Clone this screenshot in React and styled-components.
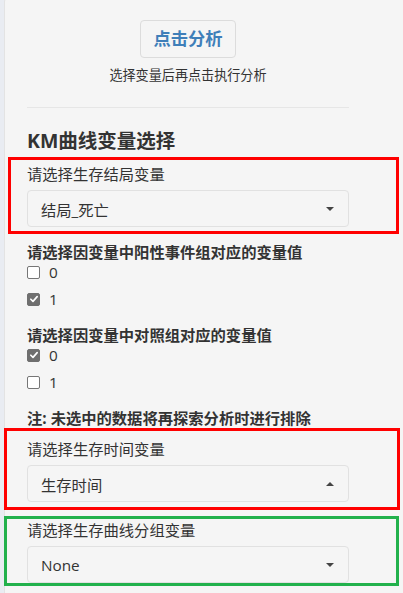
import React from "react";
import styled, { createGlobalStyle } from "styled-components";

const GlobalStyle = createGlobalStyle`
  html, body {
    margin: 0;
    padding: 0;
    overflow: hidden;
    background: #e9ecf2;
  }
  body {
    font-family: "Open Sans", "Noto Sans CJK SC", sans-serif;
    color: #333;
  }
`;

function Caret({ up }) {
  return (
    <S.Caret viewBox="0 0 8 4" $up={up}>
      <path d="M0 0 L8 0 L4 4 Z" fill="#444" />
    </S.Caret>
  );
}

function Select({ value, up }) {
  return (
    <S.Select>
      <span>{value}</span>
      <Caret up={up} />
    </S.Select>
  );
}

function CheckRow({ label, checked }) {
  return (
    <S.CheckRow>
      <S.Box $checked={checked}>
        {checked && (
          <svg viewBox="0 0 12 12" width="10" height="10">
            <path
              d="M2.2 6.3 L4.8 8.8 L9.8 3.2"
              stroke="#fff"
              strokeWidth="2"
              fill="none"
              strokeLinecap="round"
              strokeLinejoin="round"
            />
          </svg>
        )}
      </S.Box>
      <span>{label}</span>
    </S.CheckRow>
  );
}

export default function App() {
  return (
    <>
      <GlobalStyle />
      <S.Panel>
        <S.Content>
          <S.Center>
            <S.RunButton>点击分析</S.RunButton>
            <S.Help>选择变量后再点击执行分析</S.Help>
          </S.Center>
          <S.Rule />
          <S.Heading>KM曲线变量选择</S.Heading>

          <S.Marked $color="#ff0000" $left={19} $right={50} $pt={4} $pb={4} $mt={4}>
            <S.Label>请选择生存结局变量</S.Label>
            <Select value="结局_死亡" />
          </S.Marked>

          <S.BoldLabel $mt={8}>请选择因变量中阳性事件组对应的变量值</S.BoldLabel>
          <CheckRow label="0" />
          <CheckRow label="1" checked />

          <S.BoldLabel $mt={16}>请选择因变量中对照组对应的变量值</S.BoldLabel>
          <CheckRow label="0" checked />
          <CheckRow label="1" />

          <S.BoldLabel $mt={16}>注: 未选中的数据将再探索分析时进行排除</S.BoldLabel>

          <S.Marked $color="#ff0000" $left={23} $right={51} $pt={8} $pb={5} $mt={0}>
            <S.Label>请选择生存时间变量</S.Label>
            <Select value="生存时间" up />
          </S.Marked>

          <S.Marked $color="#22b14c" $left={23} $right={50} $pt={1} $pb={0} $mt={6}>
            <S.Label>请选择生存曲线分组变量</S.Label>
            <Select value="None" />
          </S.Marked>
        </S.Content>
      </S.Panel>
    </>
  );
}

const S = {
  Panel: styled.div`
    margin: -2px 0 0 4px;
    width: 399px;
    height: 600px;
    box-sizing: border-box;
    background: #f5f5f5;
    border: 1px solid #e3e3e3;
    border-right: none;
    border-radius: 4px 0 0 4px;
    padding: 21px 0 0 22px;
  `,
  Content: styled.div`
    width: 322px;
  `,
  Center: styled.div`
    display: flex;
    flex-direction: column;
    align-items: center;
  `,
  RunButton: styled.button`
    height: 38px;
    padding: 0 12px;
    border: 1px solid #dcdcdc;
    border-radius: 4px;
    background: #f5f5f5;
    color: #3f7fb9;
    font-family: "Open Sans", "Noto Sans CJK SC", sans-serif;
    font-size: 17.3px;
    font-weight: 700;
    line-height: 36px;
  `,
  Help: styled.div`
    margin-top: 8px;
    font-size: 13.1px;
    line-height: 18px;
  `,
  Rule: styled.div`
    margin-top: 23px;
    height: 1px;
    background: #e6e6e6;
  `,
  Heading: styled.h4`
    margin: 21px 0 0;
    font-size: 19.5px;
    font-weight: 700;
    line-height: 24px;
  `,
  Marked: styled.div`
    margin: ${(p) => p.$mt}px -${(p) => p.$right}px 0 -${(p) => p.$left}px;
    padding: ${(p) => p.$pt}px ${(p) => p.$right - 3}px ${(p) => p.$pb}px
      ${(p) => p.$left - 3}px;
    border: 3px solid ${(p) => p.$color};
  `,
  Label: styled.div`
    font-size: 15.3px;
    line-height: 20px;
    margin-bottom: 6px;
  `,
  BoldLabel: styled.div`
    margin-top: ${(p) => p.$mt}px;
    font-size: 15.3px;
    font-weight: 700;
    line-height: 20px;
  `,
  Select: styled.div`
    height: 37px;
    box-sizing: border-box;
    display: flex;
    align-items: center;
    justify-content: space-between;
    padding: 0 14px 0 13px;
    border: 1px solid #e1e1e1;
    border-radius: 4px;
    font-size: 15.3px;
  `,
  Caret: styled.svg`
    width: 8px;
    height: 4px;
    transform: ${(p) => (p.$up ? "rotate(180deg)" : "none")};
  `,
  CheckRow: styled.div`
    display: flex;
    align-items: center;
    gap: 9px;
    height: 20px;
    font-size: 15.3px;
    & + & {
      margin-top: 7px;
    }
  `,
  Box: styled.span`
    width: 13px;
    height: 13px;
    box-sizing: border-box;
    display: inline-flex;
    align-items: center;
    justify-content: center;
    border-radius: 2px;
    border: 1px solid ${(p) => (p.$checked ? "#6f6f6f" : "#767676")};
    background: ${(p) => (p.$checked ? "#6f6f6f" : "#fff")};
  `,
};
